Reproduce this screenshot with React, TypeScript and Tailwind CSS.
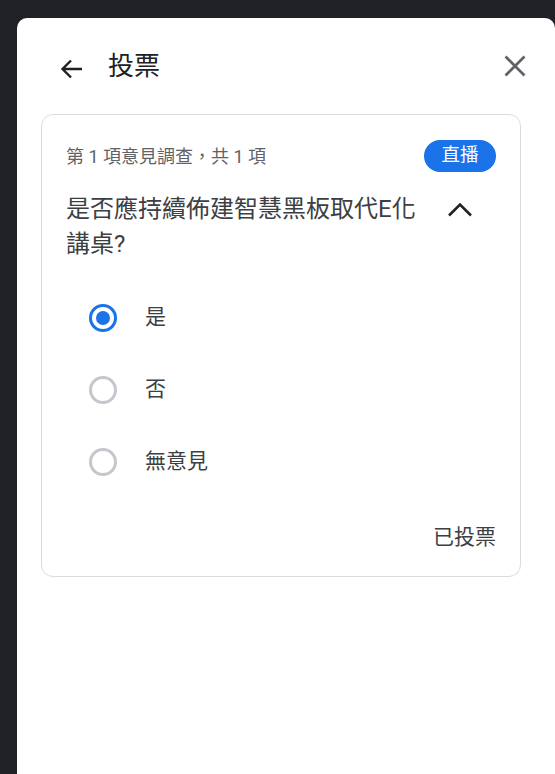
import React from 'react';

const font = { fontFamily: 'Roboto, "Noto Sans CJK TC", sans-serif' };

const options = [
  { label: '是', checked: true },
  { label: '否', checked: false },
  { label: '無意見', checked: false },
];

const Radio: React.FC<{ checked: boolean }> = ({ checked }) => (
  <div
    className={`w-[28px] h-[28px] rounded-full border-[3px] flex items-center justify-center flex-none ${
      checked ? 'border-[#1a73e8]' : 'border-[#c4c7cc]'
    }`}
  >
    {checked && <div className="w-[14px] h-[14px] rounded-full bg-[#1a73e8]" />}
  </div>
);

const App: React.FC = () => {
  return (
    <div lang="zh-TW" className="min-h-screen bg-[#202124] pt-[18px] pl-[17px] overflow-hidden" style={font}>
      <div className="bg-white rounded-t-[10px] w-[538px] h-[756px]">
        {/* header */}
        <div className="flex items-center h-[96px]">
          <svg className="ml-[42px] mt-[5px]" width="24" height="24" viewBox="0 0 24 24" fill="none">
            <path d="M23 12H3M12 3.5L3.5 12l8.5 8.5" stroke="#202124" strokeWidth="2.4" />
          </svg>
          <h1 className="ml-[25px] text-[26px] text-[#202124] leading-none">投票</h1>
          <svg className="ml-auto mr-[29px]" width="22" height="22" viewBox="0 0 22 22" fill="none">
            <path d="M1.5 1.5L20.5 20.5M20.5 1.5L1.5 20.5" stroke="#5f6368" strokeWidth="2.7" />
          </svg>
        </div>

        {/* poll card */}
        <div className="ml-[24px] w-[480px] border border-[#dadce0] rounded-[12px] px-[24px] pt-[25px] pb-[25px]">
          <div className="flex items-center justify-between h-[32px]">
            <span className="text-[18px] text-[#5f6368]">第 1 項意見調查，共 1 項</span>
            <span className="h-[32px] w-[72px] rounded-full bg-[#1a73e8] text-white text-[18.5px] flex items-center justify-center">
              直播
            </span>
          </div>

          <div className="flex items-start mt-[20px]">
            <p className="w-[362px] text-[24px] leading-[35px] text-[#3c4043]">
              是否應持續佈建智慧黑板取代E化講桌?
            </p>
            <svg className="ml-auto mr-[24px] mt-[5px]" width="24" height="24" viewBox="0 0 24 24" fill="none">
              <path d="M1 18.5L12 7.5l11 11" stroke="#202124" strokeWidth="2.6" />
            </svg>
          </div>

          <div className="mt-[20px] flex flex-col">
            {options.map((o) => (
              <div key={o.label} className="h-[72px] flex items-center pl-[23px]">
                <Radio checked={o.checked} />
                <span className="ml-[28px] text-[21px] text-[#3c4043]">{o.label}</span>
              </div>
            ))}
          </div>

          <div className="mt-[25px] flex justify-end text-[21px] leading-[28px] text-[#3c4043]">已投票</div>
        </div>
      </div>
    </div>
  );
};

export default App;
